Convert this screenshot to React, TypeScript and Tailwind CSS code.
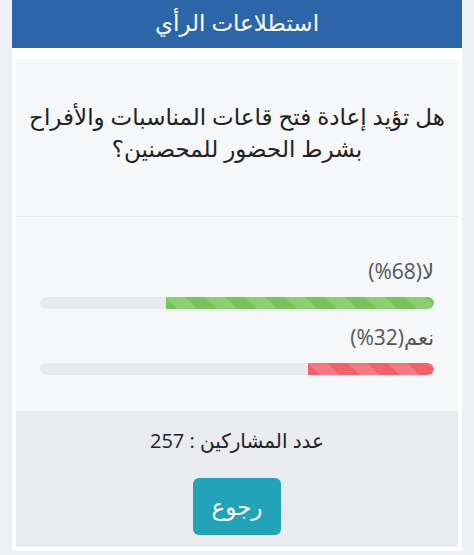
// Poll results widget (RTL)

const results = [
  { label: 'لا(68%)', percent: 68, color: 'bg-[#78c35c]' },
  { label: 'نعم(32%)', percent: 32, color: 'bg-[#f1616c]' },
];

const stripes = {
  backgroundImage:
    'linear-gradient(45deg, rgba(255,255,255,.15) 25%, transparent 25%, transparent 50%, rgba(255,255,255,.15) 50%, rgba(255,255,255,.15) 75%, transparent 75%, transparent)',
  backgroundSize: '40px 40px',
};

export default function App() {
  return (
    <div
      dir="rtl"
      className="min-h-[555px] bg-[#eef0f3] px-3"
      style={{ fontFamily: '"Open Sans", "DejaVu Sans", sans-serif' }}
    >
      <div className="bg-white pb-1">
        <div className="h-12 bg-[#2d66a8] flex items-center justify-center pb-1">
          <h2 className="text-[23px] text-white">استطلاعات الرأي</h2>
        </div>

        <div className="mx-1 mt-[11px] bg-[#f6f7f9]">
          <div className="h-[158px] flex items-center justify-center border-b border-[#e4e6ea] px-3">
            <p className="text-[23px] leading-[32px] text-[#222] text-center whitespace-nowrap pb-3">
              هل تؤيد إعادة فتح قاعات المناسبات والأفراح
              <br />
              بشرط الحضور للمحصنين؟
            </p>
          </div>

          <div className="px-6 pt-[40px] pb-[36px]">
            {results.map((r, i) => (
              <div key={i} className={i > 0 ? 'mt-[14px]' : ''}>
                <div className="text-[21px] leading-[28px] text-[#555] mb-3">{r.label}</div>
                <div className="h-3 rounded-full bg-[#e8eaed] overflow-hidden">
                  <div
                    className={`h-full rounded-l-none rounded-r-full ${r.color}`}
                    style={{ width: `${r.percent}%`, ...stripes }}
                  />
                </div>
              </div>
            ))}
          </div>

          <div className="bg-[#e9ebee] pt-[16px] pb-3 flex flex-col items-center">
            <div className="text-[20px] leading-[28px] text-[#222]">عدد المشاركين : 257</div>
            <button className="mt-[23px] w-[88px] h-[57px] rounded-md bg-[#22a3b7] text-white text-[23px]">
              رجوع
            </button>
          </div>
        </div>
      </div>
    </div>
  );
}
